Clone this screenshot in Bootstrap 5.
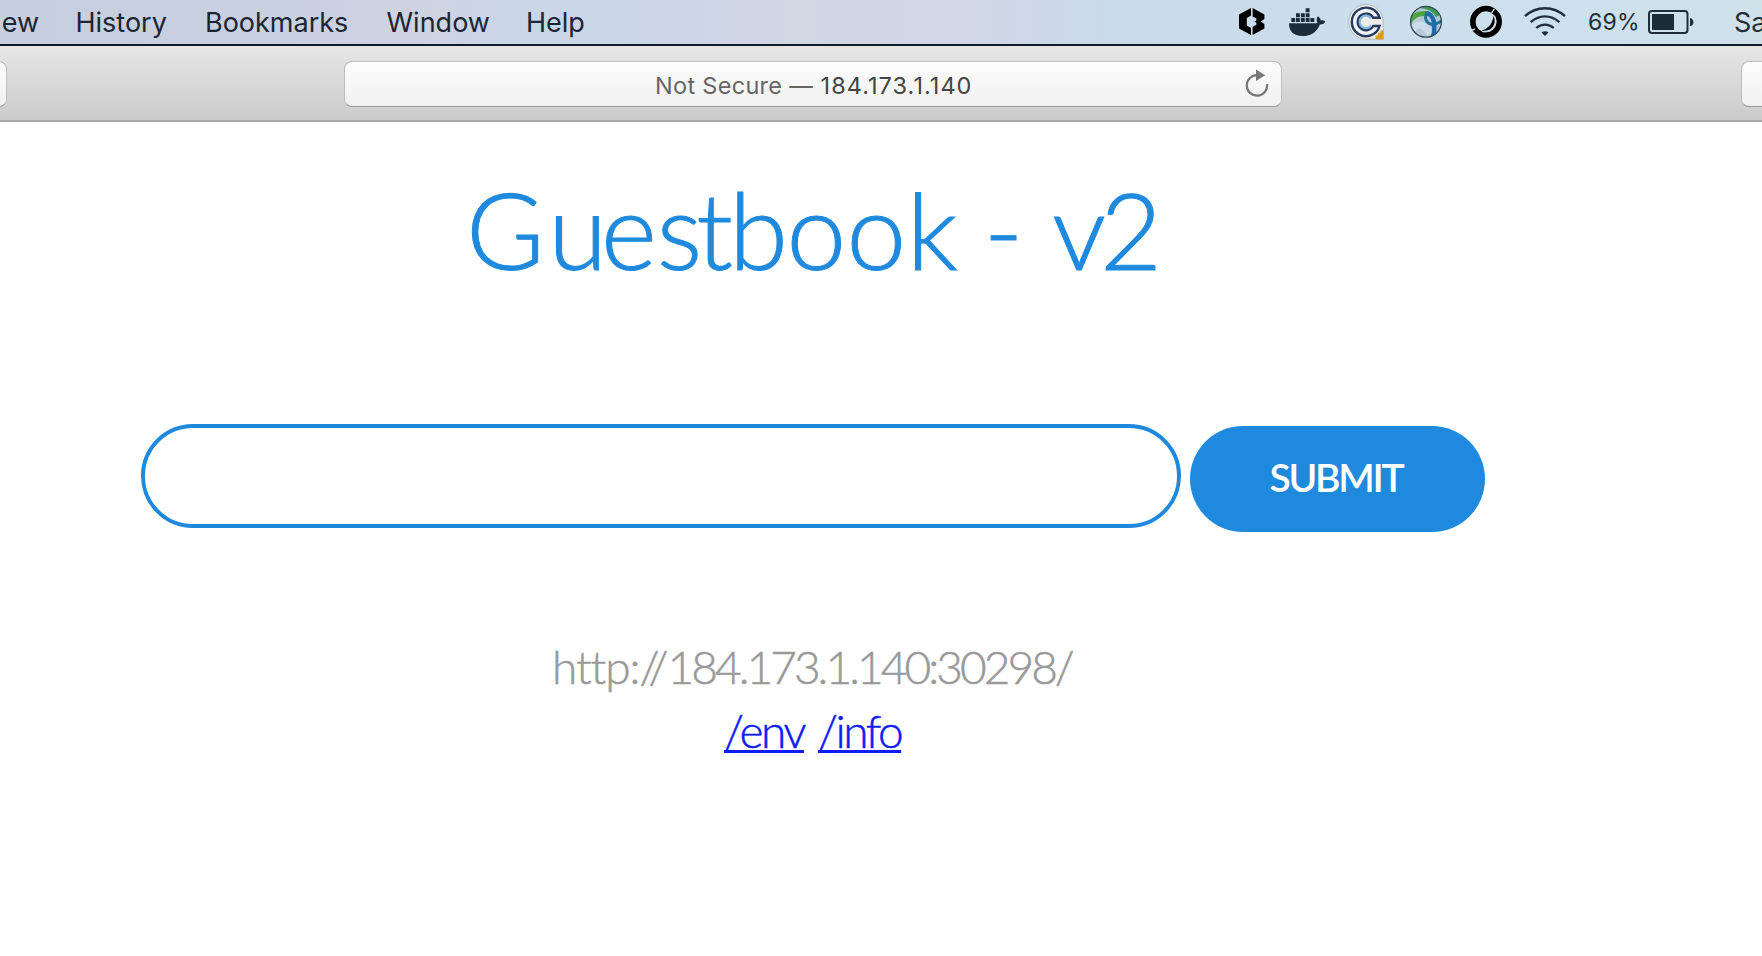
<!DOCTYPE html>
<html lang="en">
<head>
<meta charset="utf-8">
<meta name="viewport" content="width=device-width, initial-scale=1">
<title>Guestbook - v2</title>
<link href="https://cdn.jsdelivr.net/npm/bootstrap@5.3.0/dist/css/bootstrap.min.css" rel="stylesheet">
<style>
:root { --blue: #1f8add; }
body { background: #fff; overflow: hidden; }
.menubar { height: 46px; border-bottom: 2px solid #101c2b; font: 400 27px/45px Inter, sans-serif; color: #1a2536; overflow: hidden;
  background: linear-gradient(90deg, #c7cfdf 0, #c9d0e0 17%, #cfd3e1 23%, #c9d6e6 30%, #ccd6e6 38%, #d3d6e3 45%, #d0d7e5 56%, #c9dae9 64%, #cbdfec 80%, #d0e1ea 100%); }
.menubar > *, .toolbar > * { flex: none; }
.menubar svg { display: block; height: 44px; flex: none; }
.m-view { width: 39px; }
.m-history { width: 92px; margin-left: 36.5px; }
.m-bookmarks { width: 144px; margin-left: 37.5px; }
.m-window { width: 138px; margin-left: 37.5px; }
.m-help { width: 60px; margin-left: 1.5px; }
.m-icons { margin-left: 647px; }
.m-percent { font-size: 23px; line-height: 44px; width: 60px; color: #1f2e3a; letter-spacing: .2px; }
.m-day { color: #1f2e3a; margin-left: 34px; }
.toolbar { height: 76px; border-bottom: 2px solid #a9a9a9; background: linear-gradient(#e6e6e6, #cbcbcb); overflow: hidden; }
.field { height: 46px; margin-top: 15px; border: 1px solid #bdbdbd; border-bottom-color: #999; border-radius: 8px;
  background: linear-gradient(#fcfcfc, #f1f1f1); }
.field-left { width: 18px; margin-left: -11px; }
.field-url { width: 938px; margin-left: 337px; font: 400 23.5px/47px Inter, sans-serif; letter-spacing: .3px; color: #666; padding: 0 11px 0 310px; }
.field-right { width: 30px; margin-left: 459px; }
.host { color: #444; margin-left: 7.5px; letter-spacing: 1.05px; }
.page { width: 1626px; font-family: Lato, sans-serif; font-weight: 300; }
.headline { height: 120px; margin: 47px 0 0; font-size: 107px; line-height: 120px; font-weight: 300; color: var(--blue); padding-left: 466px; -webkit-text-stroke: 1px var(--blue); }
.headline .dash { margin-left: 26px; }
.headline .ver { margin-left: 29px; letter-spacing: -6px; }
.entry { margin: 135px 0 0 141px; }
.entry .form-control { width: 1040px; height: 104px; border: 4px solid var(--blue); border-radius: 52px; font-size: 38px; padding: 0 40px; }
.entry .btn { width: 295px; height: 106px; margin: 2px 0 0 9px; border: 0; border-radius: 53px; background: var(--blue); color: #fff; font-size: 39px; font-weight: 600; letter-spacing: -2.3px; padding: 0 3px 3px 0; line-height: 103px; }
.addr { margin-top: 103px; font-size: 46px; line-height: 64.5px; color: #999; -webkit-text-stroke: .5px currentColor; }
.addr .host-line { letter-spacing: -2.95px; padding-left: 552px; }
.addr .scheme { letter-spacing: -1.1px; }
.addr .links { padding-left: 724px; letter-spacing: -2.5px; line-height: 62px; }
.addr a { color: #0d1cf5; text-decoration: underline; text-decoration-thickness: 3px; text-underline-offset: 2px; text-decoration-skip-ink: none; }
.addr a + a { margin-left: 14px; }
/* kerning of the large title */
.k-g { letter-spacing: 3.5px; } .k-u { letter-spacing: -6px; } .k-s { letter-spacing: -6px; } .k-t { letter-spacing: -4px; } .k-b { letter-spacing: -1.5px; } .k-o { letter-spacing: .5px; }
</style>
</head>
<body>
<header>
  <nav class="menubar d-flex text-nowrap">
    <div class="m-view d-flex justify-content-end">ew</div>
    <div class="m-history">History</div>
    <div class="m-bookmarks">Bookmarks</div>
    <div class="m-window">Window</div>
    <div class="m-help">Help</div>
    <div class="m-icons d-flex">
      <svg width="40" viewBox="1233 0 40 44" aria-hidden="true">
        <path d="M1251 8v27l-12-6.500v-14z" fill="#000"/><path d="M1251 15.500l-4.200 2.500v7.500l4.200 2.500z" fill="#cbdeeb"/>
        <path d="M1252.600 8l11.800 6.400v4.600l-3.600 2.400 3.600 2.600v4.600L1252.600 35v-8.200l3.800-2v-2l-2.200-1.200 2.200-1.200v-2l-3.800-2z" fill="#000"/>
      </svg>
      <svg width="65" viewBox="1273 0 65 44" aria-hidden="true">
        <g fill="#1c2d3a"><path d="M1289 23.300h26.300c1.400 0 2.200-.5 2.200-.5-1.300-2-1.200-4.600.4-6.600 1.800 1.200 2.700 2.600 2.900 4.200 1.600-.3 3.200 0 4.600.9-.9 2.300-2.800 3.200-5.500 3.100C1316.900 32 1311 36 1302.500 36c-9.200 0-13.500-4.600-13.500-12.700z"/>
        <path d="M1291.300 18h3.900v4h-3.900zM1296 18h3.900v4h-3.900zM1300.900 18h3.900v4h-3.900zM1305.700 18h3.900v4h-3.900zM1310.400 18h3.900v4h-3.900zM1296 13.200h3.900v4h-3.900zM1300.900 13.200h3.900v4h-3.900zM1305.700 13.200h3.900v4h-3.900zM1305.700 8.200h3.900v4h-3.900z"/></g>
      </svg>
      <svg width="60" viewBox="1338 0 60 44" aria-hidden="true">
        <path d="M1366 4.500a17.200 17.200 0 0 1 17.200 17.200v17.500H1366a17.300 17.300 0 0 1 0-34.700z" fill="#ecebea" stroke="#b5b8bb" stroke-width="1"/>
        <path d="M1379.600 17.800a14.200 14.200 0 1 0 0 8.200h-6.300a8.300 8.300 0 1 1 0-8.200z" fill="#eef2f6" stroke="#233a5c" stroke-width="2.400"/>
        <path d="M1371.200 18.500a6.300 6.300 0 1 0 0 6.800" fill="none" stroke="#7db5df" stroke-width="2.200"/>
        <path d="M1375.500 39.300v-3.600l2.500-.5v-2.400h2.500v-2l3-.8v9.300z" fill="#dc9a28"/>
      </svg>
      <svg width="56" viewBox="1398 0 56 44" aria-hidden="true">
        <defs><clipPath id="globe"><circle cx="1426" cy="21.800" r="15.500"/></clipPath></defs>
        <circle cx="1426" cy="21.800" r="15.500" fill="#b3c8d8"/>
        <g clip-path="url(#globe)" fill="none">
          <path d="M1412 31c4-9 12-8 18 3" stroke="#dfe9f1" stroke-width="7" opacity=".6"/>
          <path d="M1409 22c5-8 11-9 19-8.500" stroke="#4fa53d" stroke-width="5"/>
          <path d="M1421 6c9 1 13 4 17 10" stroke="#3f9a54" stroke-width="4.500"/>
          <path d="M1427 12c-3 6-1 11 4 12 4 1 8-1 12-4" stroke="#1f7290" stroke-width="3"/>
          <path d="M1427 13c7 3 9 10 6 25" stroke="#1e69b0" stroke-width="4.500"/>
        </g>
        <circle cx="1426" cy="21.800" r="15.400" fill="none" stroke="#33464f" stroke-width="1.300"/>
      </svg>
      <svg width="60" viewBox="1454 0 60 44" aria-hidden="true">
        <circle cx="1486" cy="21.800" r="13.200" fill="none" stroke="#000" stroke-width="5.500"/>
        <path d="M1493.500 16c4 9-3 16.500-12 14.500 6.500-1.500 11-6.500 12-14.500z" fill="#000"/>
        <path d="M1491.500 12.800l3-4M1474.800 29l-3 1.300" stroke="#cbdfec" stroke-width="1.400"/>
        <path d="M1494.500 15.500c4 8.500-.5 17-12 16.300" fill="none" stroke="#cbdfec" stroke-width="1"/>
      </svg>
      <svg width="74" viewBox="1514 0 74 44" aria-hidden="true">
        <g fill="none" stroke="#1f2e3a" stroke-width="2.300"><path d="M1525 16.200c11.500-10.600 28.500-10.600 40 0"/><path d="M1530.700 22.200c8.500-7.800 20.100-7.800 28.600 0"/><path d="M1536.300 28c5.200-4.600 12.200-4.600 17.400 0"/></g>
        <path d="M1541.500 32.500c2-1.800 5-1.800 7 0l-3.500 3.500z" fill="#1f2e3a"/>
      </svg>
    </div>
    <div class="m-percent">69%</div>
    <svg width="52" viewBox="1648 0 52 44" aria-hidden="true">
      <rect x="1649" y="11" width="38.500" height="22" rx="3" fill="none" stroke="#1f2e3a" stroke-width="2"/>
      <path d="M1652 14h22v16h-22z" fill="#1c2d38"/><path d="M1690 18c4.600 1 4.600 7.300 0 8.300z" fill="#1f2e3a"/>
    </svg>
    <div class="m-day">Sa</div>
  </nav>
  <div class="toolbar d-flex">
    <div class="field field-left"></div>
    <div class="field field-url d-flex text-nowrap">
      <span>Not Secure —</span><span class="host">184.173.1.140</span>
      <svg class="ms-auto" width="28" height="44" viewBox="1242 62 28 44" aria-label="Reload">
        <path d="M1257.500 75.200a10.200 10.200 0 1 0 9.600 9" fill="none" stroke="#777" stroke-width="2.200"/><path d="M1256 69.500l9.200 5.800-9.200 5.600z" fill="#777"/>
      </svg>
    </div>
    <div class="field field-right"></div>
  </div>
</header>
<main class="page">
  <h1 class="headline d-flex text-nowrap"><span><span class="k-g">G</span><span class="k-u">u</span>e<span class="k-s">s</span><span class="k-t">t</span><span class="k-b">b</span><span class="k-o">oo</span>k</span><span class="dash">-</span><span class="ver">v2</span></h1>
  <form class="entry d-flex align-items-start">
    <input type="text" class="form-control flex-shrink-0" aria-label="Entry">
    <button type="button" class="btn flex-shrink-0">SUBMIT</button>
  </form>
  <div class="addr text-nowrap">
    <div class="host-line"><span class="scheme">http://</span>184.173.1.140:30298/</div>
    <div class="links d-flex"><a href="#">/env</a><a href="#">/info</a></div>
  </div>
</main>
<script src="https://cdn.jsdelivr.net/npm/bootstrap@5.3.0/dist/js/bootstrap.bundle.min.js"></script>
</body>
</html>
